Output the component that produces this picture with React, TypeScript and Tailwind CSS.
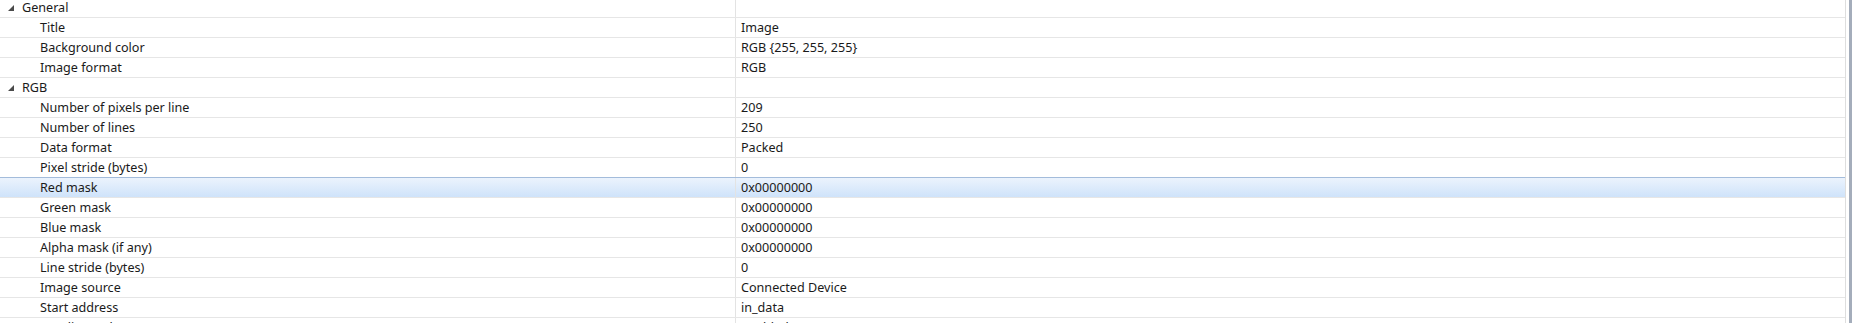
import React from "react";

type Row = { label: string; value?: string; group?: boolean; selected?: boolean };

const rows: Row[] = [
  { label: "General", group: true },
  { label: "Title", value: "Image" },
  { label: "Background color", value: "RGB {255, 255, 255}" },
  { label: "Image format", value: "RGB" },
  { label: "RGB", group: true },
  { label: "Number of pixels per line", value: "209" },
  { label: "Number of lines", value: "250" },
  { label: "Data format", value: "Packed" },
  { label: "Pixel stride (bytes)", value: "0" },
  { label: "Red mask", value: "0x00000000", selected: true },
  { label: "Green mask", value: "0x00000000" },
  { label: "Blue mask", value: "0x00000000" },
  { label: "Alpha mask (if any)", value: "0x00000000" },
  { label: "Line stride (bytes)", value: "0" },
  { label: "Image source", value: "Connected Device" },
  { label: "Start address", value: "in_data" },
  { label: "Scanline order", value: "enabled" },
];

function Arrow() {
  return (
    <svg width="6" height="6" viewBox="0 0 6 6" className="shrink-0">
      <polygon points="6,0 6,6 0,6" fill="#4a4a4a" />
    </svg>
  );
}

export default function App() {
  return (
    <div
      className="h-[323px] w-[1852px] overflow-hidden bg-white flex text-[12.6px] text-[#1a1a1a]"
      style={{ fontFamily: '"Noto Sans", "Liberation Sans", sans-serif' }}
    >
      <div className="w-[1846px] border-r border-[#dedede] flex flex-col -mt-[3px]">
        {rows.map((r, i) => (
          <div
            key={i}
            className={
              "h-[20px] shrink-0 flex border-t " +
              (r.selected
                ? "border-[#a3bcdb] bg-gradient-to-b from-[#ebf3fd] to-[#cfe3fa]"
                : "border-[#e6e6e6]")
            }
          >
            <div className="w-[736px] shrink-0 flex items-center border-r border-[#e3e3e3]">
              {r.group ? (
                <div className="flex items-center pl-[8px] gap-[8px]">
                  <Arrow />
                  <span className="leading-[19px]">{r.label}</span>
                </div>
              ) : (
                <span className="pl-[40px] leading-[19px]">{r.label}</span>
              )}
            </div>
            <div className="flex-1 flex items-center pl-[5px]">
              <span className="leading-[19px]">{r.value ?? ""}</span>
            </div>
          </div>
        ))}
      </div>
      <div className="w-[3px]" />
      <div className="w-[3px] bg-[#a4adbb]" />
    </div>
  );
}
